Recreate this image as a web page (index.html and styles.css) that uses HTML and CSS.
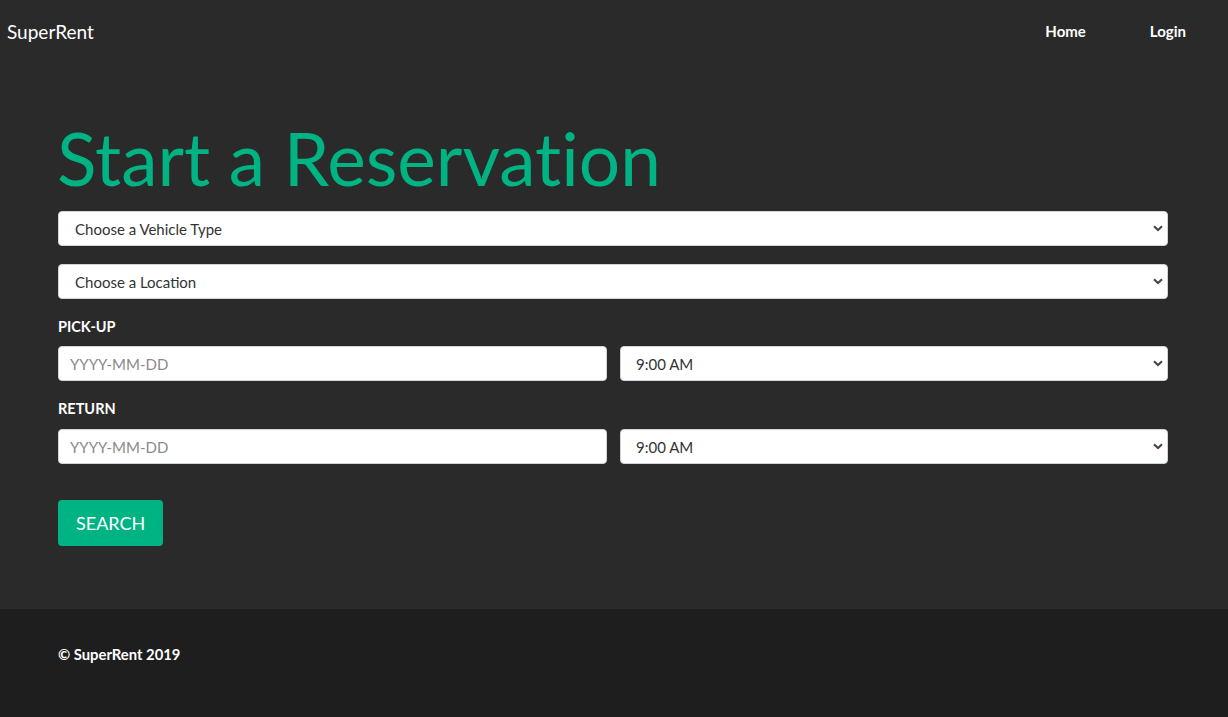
FILE: index.html
```html
<!DOCTYPE html>
<html lang="en">
<head>
<meta charset="utf-8">
<title>SuperRent</title>
<link rel="stylesheet" href="styles.css">
</head>
<body>
<header class="navbar">
  <a class="brand" href="#">SuperRent</a>
  <nav class="nav">
    <a class="nav-link" href="#">Home</a>
    <a class="nav-link" href="#">Login</a>
  </nav>
</header>
<main class="main">
  <div class="container">
    <h1 class="title">Start a Reservation</h1>
    <form class="form">
      <div class="select-wrap first">
        <select class="control select">
          <option>Choose a Vehicle Type</option>
        </select>
        <svg class="chev" width="10" height="7" viewBox="0 0 10 7"><path d="M1 1.2 L5 5 L9 1.2" fill="none" stroke="#444" stroke-width="2"/></svg>
      </div>
      <div class="select-wrap second">
        <select class="control select">
          <option>Choose a Location</option>
        </select>
        <svg class="chev" width="10" height="7" viewBox="0 0 10 7"><path d="M1 1.2 L5 5 L9 1.2" fill="none" stroke="#444" stroke-width="2"/></svg>
      </div>
      <label class="label">PICK-UP</label>
      <div class="row pickup">
        <input class="control input" type="text" placeholder="YYYY-MM-DD">
        <div class="select-wrap">
          <select class="control select time">
            <option>9:00 AM</option>
          </select>
          <svg class="chev" width="10" height="7" viewBox="0 0 10 7"><path d="M1 1.2 L5 5 L9 1.2" fill="none" stroke="#444" stroke-width="2"/></svg>
        </div>
      </div>
      <label class="label">RETURN</label>
      <div class="row">
        <input class="control input" type="text" placeholder="YYYY-MM-DD">
        <div class="select-wrap">
          <select class="control select time">
            <option>9:00 AM</option>
          </select>
          <svg class="chev" width="10" height="7" viewBox="0 0 10 7"><path d="M1 1.2 L5 5 L9 1.2" fill="none" stroke="#444" stroke-width="2"/></svg>
        </div>
      </div>
      <button class="btn" type="button">SEARCH</button>
    </form>
  </div>
</main>
<footer class="footer">
  <div class="container">
    <p class="copy">© SuperRent 2019</p>
  </div>
</footer>
</body>
</html>
```

FILE: styles.css
```css
* { box-sizing: border-box; }
html, body { margin: 0; padding: 0; }
body {
  font-family: Lato, "Open Sans", sans-serif;
  background: #2a2a2a;
  color: #fff;
  min-height: 717px;
  display: flex;
  flex-direction: column;
}
a { text-decoration: none; color: #fff; }

.navbar {
  height: 62px;
  display: flex;
  align-items: center;
  justify-content: space-between;
  padding: 0 7px;
}
.brand { font-size: 19px; }
.nav { display: flex; gap: 64px; padding-right: 35px; }
.nav-link { font-size: 15px; font-weight: 700; }

.main {
  padding: 53px 0 63px;
  background: #2a2a2a;
}
.container {
  width: 1110px;
  margin: 0 auto;
  position: relative;
  left: -1px;
}
.title {
  margin: 0 0 10px;
  font-size: 73px;
  line-height: 86px;
  font-weight: 400;
  color: #00b383;
  font-variant-ligatures: none;
  font-feature-settings: "liga" 0;
  margin-left: -1px;
}
.form { display: flex; flex-direction: column; }
.select-wrap { position: relative; }
.control {
  display: block;
  width: 100%;
  height: 35px;
  border: 1px solid #ced4da;
  border-radius: 4px;
  background: #fff;
  font-family: Lato, sans-serif;
  font-size: 15px;
  color: #333;
  outline: none;
}
.select {
  -webkit-appearance: none;
  appearance: none;
  padding: 0 30px 0 16px;
}
.select.time { padding-left: 15px; }
.first { margin-bottom: 18px; }
.second { margin-bottom: 18px; }
.input {
  padding: 0 11px;
  font-size: 15px;
}
.input::placeholder { color: #8a8a8a; }
.chev {
  position: absolute;
  right: 5px;
  top: 14px;
  pointer-events: none;
}
.label {
  font-size: 14.5px;
  font-weight: 700;
  line-height: 20px;
  margin: 0 0 10px;
}
.second + .label { margin-bottom: 9px; }
.row {
  display: grid;
  grid-template-columns: 549px 548px;
  column-gap: 13px;
}
.row.pickup { margin-bottom: 18px; }
.btn {
  align-self: flex-start;
  margin-top: 36px;
  height: 46px;
  padding: 0 18px;
  background: #00b383;
  color: #fff;
  border: 0;
  border-radius: 4px;
  font-family: Lato, sans-serif;
  font-size: 18px;
}
.footer {
  flex: 1;
  background: #1e1e1e;
  padding-top: 35px;
}
.copy {
  margin: 0;
  font-size: 14.8px;
  font-weight: 700;
  line-height: 20px;
}
```
